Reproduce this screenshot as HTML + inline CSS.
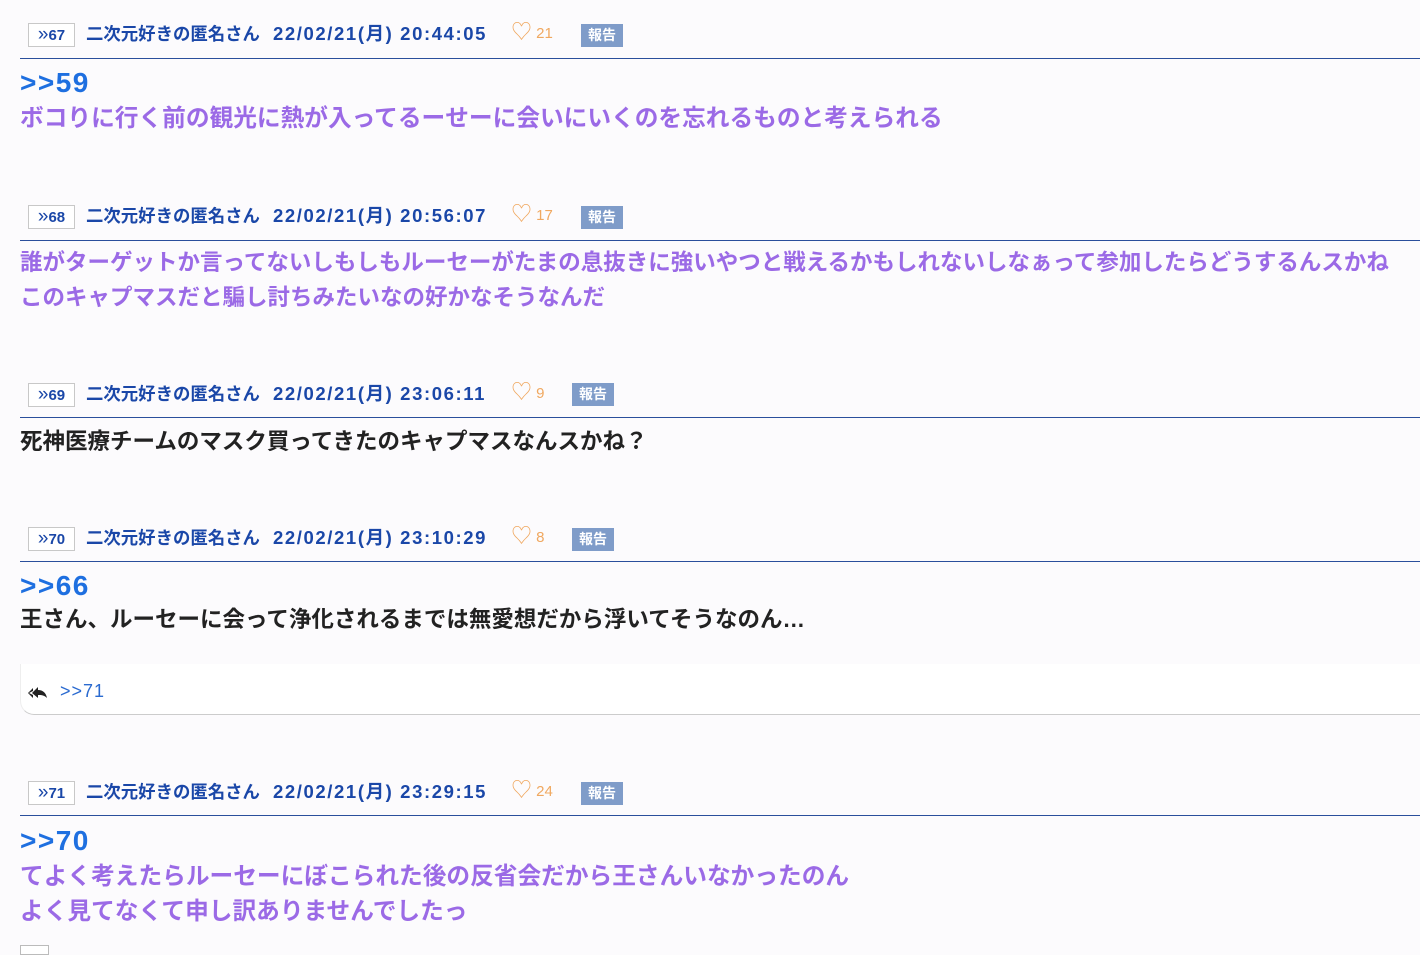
<!DOCTYPE html>
<html><head><meta charset="utf-8"><style>
body{margin:0;width:1420px;height:950px;background:#fcfbfd;font-family:"Liberation Sans","Noto Sans CJK JP",sans-serif;position:relative;overflow:hidden}
.a{position:absolute;white-space:nowrap}
.no{border:1px solid #c8c8c8;background:#fff;color:#1a47a8;font-weight:bold;font-size:15px;width:47px;height:24px;line-height:22px;text-align:center;box-sizing:border-box}
.no b{font-size:19px;font-weight:normal}
.nm{color:#1a47a8;font-weight:bold;font-size:17.4px;line-height:22px}
.dt{color:#1a47a8;font-weight:bold;font-size:18.5px;line-height:22px;letter-spacing:1.6px}
.ht{color:#f0a860;font-size:15px;line-height:22px}
.ht b{font-size:21px;font-weight:normal;vertical-align:-1px}
.rp{background:#7f9cc9;color:#fff;font-weight:bold;font-size:14px;width:42px;height:23px;line-height:23px;text-align:center}
.ln{position:absolute;left:20px;right:0;height:1px;background:#2a4f9c}
.an{color:#1e6fe0;font-weight:bold;font-size:28px;line-height:30px;letter-spacing:1.5px}
.pu{color:#9b6ae6;font-weight:bold;font-size:23.7px;line-height:30px}
.dk{color:#222;font-weight:bold;font-size:22.5px;line-height:30px}
</style></head><body>

<div class="a no" style="left:28px;top:23px"><b>»</b>67</div>
<div class="a nm" style="left:86px;top:23px">二次元好きの匿名さん</div>
<div class="a dt" style="left:273px;top:23px">22/02/21(月) 20:44:05</div>
<div class="a ht" style="left:511px;top:22px"><b>♡</b> 21</div>
<div class="a rp" style="left:581px;top:24px">報告</div>
<div class="ln" style="top:58px"></div>
<div class="a an" style="left:20px;top:68px">&gt;&gt;59</div>
<div class="a pu" style="left:20px;top:104px">ボコりに行く前の観光に熱が入ってるーせーに会いにいくのを忘れるものと考えられる</div>

<div class="a no" style="left:28px;top:205px"><b>»</b>68</div>
<div class="a nm" style="left:86px;top:205px">二次元好きの匿名さん</div>
<div class="a dt" style="left:273px;top:205px">22/02/21(月) 20:56:07</div>
<div class="a ht" style="left:511px;top:204px"><b>♡</b> 17</div>
<div class="a rp" style="left:581px;top:206px">報告</div>
<div class="ln" style="top:240px"></div>
<div class="a pu" style="left:20px;top:248px;font-size:22.5px">誰がターゲットか言ってないしもしもルーセーがたまの息抜きに強いやつと戦えるかもしれないしなぁって参加したらどうするんスかね</div>
<div class="a pu" style="left:20px;top:283px;font-size:22.5px">このキャプマスだと騙し討ちみたいなの好かなそうなんだ</div>

<div class="a no" style="left:28px;top:383px"><b>»</b>69</div>
<div class="a nm" style="left:86px;top:383px">二次元好きの匿名さん</div>
<div class="a dt" style="left:273px;top:383px">22/02/21(月) 23:06:11</div>
<div class="a ht" style="left:511px;top:382px"><b>♡</b> 9</div>
<div class="a rp" style="left:572px;top:383px">報告</div>
<div class="ln" style="top:417px"></div>
<div class="a dk" style="left:20px;top:427px">死神医療チームのマスク買ってきたのキャプマスなんスかね？</div>

<div class="a no" style="left:28px;top:527px"><b>»</b>70</div>
<div class="a nm" style="left:86px;top:527px">二次元好きの匿名さん</div>
<div class="a dt" style="left:273px;top:527px">22/02/21(月) 23:10:29</div>
<div class="a ht" style="left:511px;top:526px"><b>♡</b> 8</div>
<div class="a rp" style="left:572px;top:528px">報告</div>
<div class="ln" style="top:561px"></div>
<div class="a an" style="left:20px;top:571px">&gt;&gt;66</div>
<div class="a dk" style="left:20px;top:605px">王さん、ルーセーに会って浄化されるまでは無愛想だから浮いてそうなのん…</div>
<div class="a" style="left:20px;top:664px;right:0;height:50px;border-bottom:1px solid #ccc;border-left:1px solid #eee;border-radius:0 0 0 14px;background:#fff"></div>
<svg class="a" style="left:27px;top:686px" width="22" height="14" viewBox="0 0 22 14"><path d="M1 7 L6 2 L6 5 L2 7 L6 9 L6 12 Z" fill="#222"/><path d="M5 7 L11 1 L11 4 C16 4 19 7 20 12 C17 9 14 9 11 9 L11 12 Z" fill="#222"/></svg>
<div class="a" style="left:60px;top:681px;font-size:18px;color:#2a6ad0;letter-spacing:1px">&gt;&gt;71</div>

<div class="a no" style="left:28px;top:781px"><b>»</b>71</div>
<div class="a nm" style="left:86px;top:781px">二次元好きの匿名さん</div>
<div class="a dt" style="left:273px;top:781px">22/02/21(月) 23:29:15</div>
<div class="a ht" style="left:511px;top:780px"><b>♡</b> 24</div>
<div class="a rp" style="left:581px;top:782px">報告</div>
<div class="ln" style="top:815px"></div>
<div class="a an" style="left:20px;top:826px">&gt;&gt;70</div>
<div class="a pu" style="left:20px;top:862px">てよく考えたらルーセーにぼこられた後の反省会だから王さんいなかったのん</div>
<div class="a pu" style="left:20px;top:897px">よく見てなくて申し訳ありませんでしたっ</div>
<div class="a" style="left:20px;top:945px;width:27px;height:8px;border:1px solid #bbb;background:#fff"></div>
</body></html>
